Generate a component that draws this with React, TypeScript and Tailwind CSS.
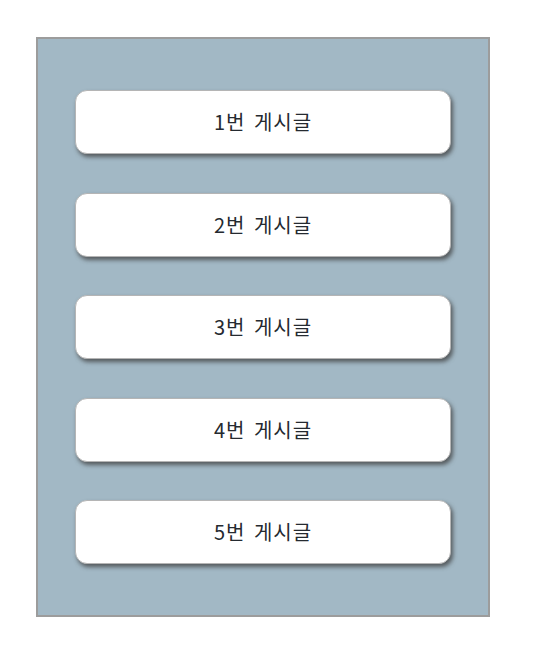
import React from "react";

export default function App() {
  const items = [1, 2, 3, 4, 5];
  return (
    <div className="w-[539px] h-[659px] bg-white pt-[37px] pl-[36px]" style={{ fontFamily: '"Noto Sans CJK KR", "Noto Sans", sans-serif' }}>
      <div className="w-[454px] border-2 border-[#9c9c9c] bg-[#a2b8c5] px-[37px] py-[51px] flex flex-col gap-[38.5px]">
        {items.map((n) => (
          <div
            key={n}
            className="h-[64px] rounded-[12px] bg-white border border-[#b5b5b5] shadow-[2px_3px_4px_rgba(60,60,60,0.75)] flex items-center justify-center text-[20px] text-[#252a30] tracking-[1px] [word-spacing:3px]"
          >
            {n}번 게시글
          </div>
        ))}
      </div>
    </div>
  );
}
